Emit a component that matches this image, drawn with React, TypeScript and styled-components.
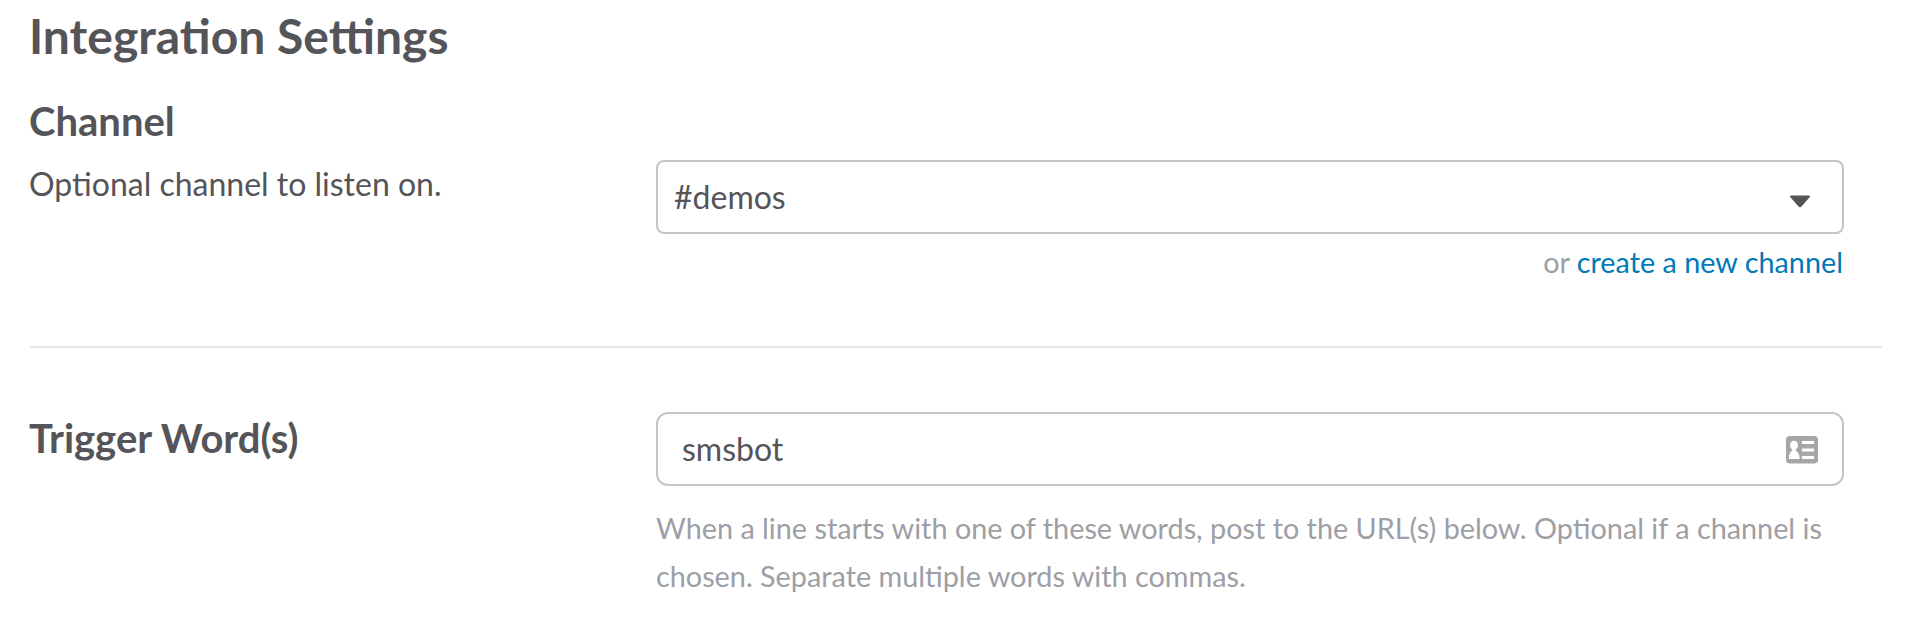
import React from "react";
import styled, { createGlobalStyle } from "styled-components";

const GlobalStyle = createGlobalStyle`
  * { box-sizing: border-box; }
  body { margin: 0; background: #fff; color: #555459; font-family: Lato, sans-serif; }
  h1, h2, p { margin: 0; }
`;
const Page = styled.main`
  height: 636px;
  padding: 10px 30px 0;
  overflow: hidden;
`;
const PageTitle = styled.h1`
  margin-left: -1px;
  font-size: 48px;
  line-height: 52px;
  font-weight: 700;
`;
const Setting = styled.section<{ $top: number }>`
  display: grid;
  grid-template-columns: 626px 1188px;
  padding-top: ${({ $top }) => $top}px;
`;
const Label = styled.div`
  margin-left: -1px;
`;
const LabelTitle = styled.h2`
  font-size: 40px;
  line-height: 52px;
  font-weight: 700;
`;
const Description = styled.p`
  margin-top: 13px;
  font-size: 32px;
  line-height: 48px;
`;
const Control = styled.div<{ $top: number }>`
  padding-top: ${({ $top }) => $top}px;
`;
const Field = styled.div<{ $radius: number; $pad: number }>`
  display: flex;
  align-items: center;
  justify-content: space-between;
  height: 74px;
  padding: 0 24px 0 ${({ $pad }) => $pad}px;
  border: 2px solid #c5c5c5;
  border-radius: ${({ $radius }) => $radius}px;
  font-size: 32px;
  line-height: 48px;
`;
const Arrow = styled.svg`
  margin: 8px 7px 0 0;
`;
const ContactCard = styled.svg`
  margin-top: 2px;
`;
const CreateNote = styled.p`
  margin-top: 6px;
  padding-right: 1px;
  font-size: 28.8px;
  line-height: 44px;
  text-align: right;
  color: #9e9ea6;
`;
const Link = styled.a`
  color: #007ab8;
`;
const Help = styled.p`
  margin-top: 18px;
  font-size: 28.8px;
  line-height: 48px;
  color: #9e9ea6;
`;
const Divider = styled.hr`
  height: 2px;
  margin: 62px 0 0;
  border: 0;
  background: #e8e8e8;
`;

export default function App() {
  return (
    <Page>
      <GlobalStyle />
      <PageTitle>Integration Settings</PageTitle>
      <Setting $top={33}>
        <Label>
          <LabelTitle>Channel</LabelTitle>
          <Description>Optional channel to listen on.</Description>
        </Label>
        <Control $top={65}>
          <Field $radius={8} $pad={16}>
            #demos
            <Arrow width="22" height="13" viewBox="0 0 22 13">
              <path d="M2.5 .5h17q2.3 0 .9 2l-7.7 8.8q-1.7 1.8-3.4 0L1.6 2.5Q.2 .5 2.5 .5Z" fill="#555459" />
            </Arrow>
          </Field>
          <CreateNote>or <Link>create a new channel</Link></CreateNote>
        </Control>
      </Setting>
      <Divider />
      <Setting $top={64}>
        <Label><LabelTitle>Trigger Word(s)</LabelTitle></Label>
        <Control $top={0}>
          <Field $radius={12} $pad={24}>
            smsbot
            <ContactCard width="32" height="28" viewBox="0 0 32 28">
              <rect width="32" height="27.5" rx="4" fill="#a6a6a6" />
              <g fill="#fff">
                <ellipse cx="8" cy="9.3" rx="4" ry="4.6" />
                <path d="M6.3 13h3.4v1.5q4 2.5 4 8.5H2.7q0-6 3.6-8.5Z" />
                <path d="M16 5h12v3H16zM16 12.5h12v3H16zM16 20h12v3H16z" />
              </g>
            </ContactCard>
          </Field>
          <Help>When a line starts with one of these words, post to the URL(s) below. Optional if a channel is chosen. Separate multiple words with commas.</Help>
        </Control>
      </Setting>
    </Page>
  );
}
